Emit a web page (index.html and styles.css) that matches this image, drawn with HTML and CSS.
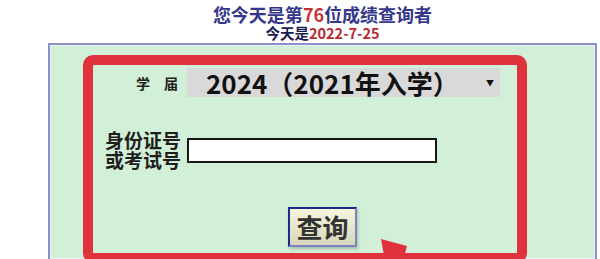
FILE: index.html
```html
<!DOCTYPE html>
<html lang="zh-CN">
<head>
    <meta charset="UTF-8">
    <meta name="viewport" content="width=device-width, initial-scale=1.0">
    <title>成绩查询</title>
    <link rel="stylesheet" href="styles.css">
</head>
<body>
    <div class="page">
        <h1 class="counter">您今天是第<span class="num">76</span>位成绩查询者</h1>
        <div class="today">今天是<span class="date">2022-7-25</span></div>

        <div class="panel">
            <form class="query-form" onsubmit="return false">
                <div class="field-grid">
                    <span class="field-label">学　届</span>
                    <div class="select-box">
                        <span class="select-value">2024（2021年入学）</span>
                        <span class="select-arrow">▼</span>
                    </div>

                    <label for="idNo" class="field-label id-label">身份证号<br>或考试号</label>
                    <input type="text" id="idNo" class="id-input">
                </div>
                <div class="actions">
                    <button type="submit" class="query-btn">查询</button>
                </div>
            </form>

            <!-- red highlight drawn over the form -->
            <div class="highlight"></div>
            <svg class="highlight-arrow" width="50" height="26" viewBox="0 0 50 26">
                <polygon points="11,4 37,11 33,26 15,26" fill="#e0323c"/>
            </svg>
        </div>
    </div>
</body>
</html>
```

FILE: styles.css
```css
body {
    margin: 0;
    background-color: #ffffff;
    font-family: "Noto Sans CJK SC", "Noto Sans", sans-serif;
    overflow: hidden;
}
.page {
    margin-left: 48px;
    width: 549px;
}
.counter {
    margin: 0;
    padding-top: 3px;
    font-size: 18px;
    line-height: 22px;
    font-weight: bold;
    text-align: center;
    color: #34378a;
}
.counter .num {
    color: #c8303a;
}
.today {
    height: 18px;
    font-size: 14.5px;
    line-height: 15px;
    font-weight: bold;
    text-align: center;
    color: #1c1c52;
}
.today .date {
    color: #b8282e;
}
.panel {
    position: relative;
    box-sizing: border-box;
    height: 216px;
    overflow: hidden;
    border: 2px solid #8c90c8;
    border-bottom: none;
    box-shadow: inset 0 0 0 1px #eef0fa;
    background-color: #d2efd7;
}
.query-form {
    padding-top: 23px;
}
.field-grid {
    display: grid;
    grid-template-columns: 94px 313px;
    row-gap: 33px;
    align-items: center;
    margin-left: 43px;
}
.field-label {
    padding-right: 9px;
    text-align: right;
    font-size: 14px;
    font-weight: bold;
    color: #222;
}
.id-label {
    padding-right: 6px;
    font-size: 19px;
    line-height: 20px;
    color: #1e1e1e;
}
.select-box {
    display: flex;
    align-items: center;
    justify-content: space-between;
    height: 29px;
    background-color: #d9d9d9;
}
.select-value {
    padding-left: 19px;
    font-size: 26px;
    line-height: 29px;
    font-weight: bold;
    color: #111;
    white-space: nowrap;
}
.select-arrow {
    padding-right: 6px;
    font-size: 8px;
    color: #111;
}
.id-input {
    box-sizing: border-box;
    width: 250px;
    height: 25px;
    border: 2px solid #151515;
    background-color: #fff;
}
.actions {
    margin-top: 37px;
    text-align: center;
}
.query-btn {
    box-sizing: border-box;
    width: 69px;
    height: 40px;
    padding: 0;
    border: 2px solid;
    border-color: #1c2a8c #7a84c4 #7a84c4 #1c2a8c;
    background: linear-gradient(#f7f5de, #d8d7bb);
    box-shadow: 1px 2px 3px rgba(0, 0, 0, 0.2);
    font-family: inherit;
    font-size: 26px;
    line-height: 1;
    font-weight: bold;
    color: #333;
    cursor: pointer;
}
.highlight {
    position: absolute;
    left: 33px;
    top: 10px;
    box-sizing: border-box;
    width: 444px;
    height: 208px;
    border: 10px solid #e0323c;
    border-radius: 10px;
    pointer-events: none;
}
.highlight-arrow {
    position: absolute;
    left: 320px;
    top: 190px;
}
```
